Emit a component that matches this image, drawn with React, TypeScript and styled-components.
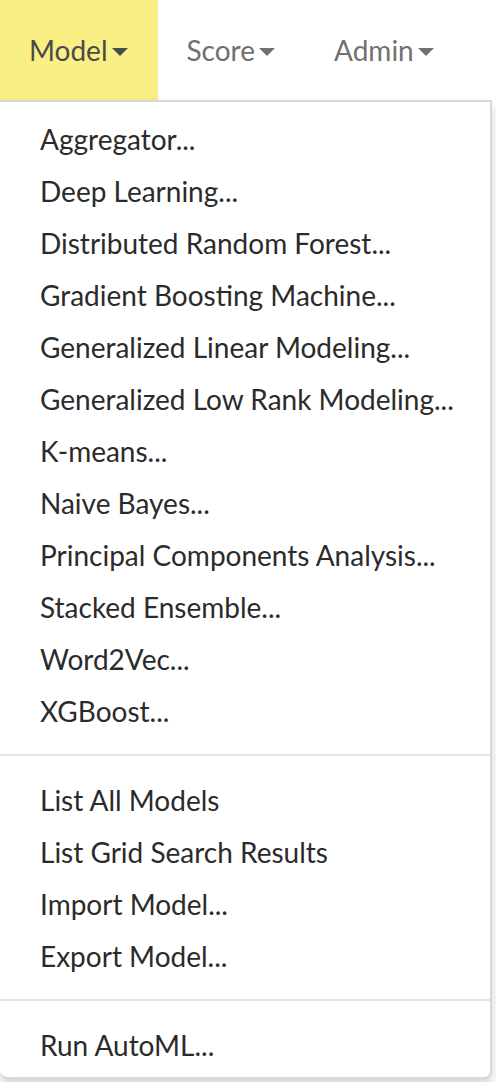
import React from "react";
import styled, { createGlobalStyle } from "styled-components";

const GlobalStyle = createGlobalStyle`
  html, body {
    margin: 0;
    padding: 0;
    background: #ffffff;
  }
  body {
    font-family: Lato, "Open Sans", Arial, sans-serif;
  }
`;

const Page = styled.div`
  position: relative;
  width: 496px;
  height: 1082px;
  overflow: hidden;
  background: #ffffff;
`;

const Navbar = styled.div`
  display: flex;
  height: 100px;
  background: #ffffff;
`;

const NavItem = styled.div<{ $active?: boolean }>`
  display: flex;
  align-items: center;
  padding: 0 30px 0 29px;
  height: 100px;
  font-size: 28px;
  color: ${(p) => (p.$active ? "#4a4a4a" : "#707070")};
  background: ${(p) => (p.$active ? "#f9ef85" : "transparent")};
  box-sizing: border-box;
`;

const Caret = styled.span`
  display: inline-block;
  width: 0;
  height: 0;
  margin-left: 4px;
  margin-top: 4px;
  border-top: 8px solid currentColor;
  border-left: 8px solid transparent;
  border-right: 8px solid transparent;
`;

const Dropdown = styled.ul`
  position: absolute;
  top: 100px;
  left: 0;
  width: 492px;
  box-sizing: border-box;
  margin: 0;
  padding: 11px 0 6px;
  list-style: none;
  background: #ffffff;
  border: 2px solid #d9d9d9;
  border-left: none;
  border-radius: 0 0 8px 8px;
  box-shadow: 0 6px 12px rgba(0, 0, 0, 0.175);
`;

const MenuItem = styled.li`
  padding: 6px 20px 6px 40px;
  line-height: 40px;
  font-size: 28px;
  color: #2b2b2b;
  white-space: nowrap;
`;

const Divider = styled.li`
  height: 2px;
  margin: 17px 0 18px;
  background: #e5e5e5;
`;

const builders = [
  "Aggregator...",
  "Deep Learning...",
  "Distributed Random Forest...",
  "Gradient Boosting Machine...",
  "Generalized Linear Modeling...",
  "Generalized Low Rank Modeling...",
  "K-means...",
  "Naive Bayes...",
  "Principal Components Analysis...",
  "Stacked Ensemble...",
  "Word2Vec...",
  "XGBoost...",
];

const listing = ["List All Models", "List Grid Search Results", "Import Model...", "Export Model..."];

export default function App() {
  return (
    <Page>
      <GlobalStyle />
      <Navbar>
        <NavItem $active>
          Model
          <Caret />
        </NavItem>
        <NavItem>
          Score
          <Caret />
        </NavItem>
        <NavItem>
          Admin
          <Caret />
        </NavItem>
      </Navbar>
      <Dropdown>
        {builders.map((b) => (
          <MenuItem key={b}>{b}</MenuItem>
        ))}
        <Divider />
        {listing.map((b) => (
          <MenuItem key={b}>{b}</MenuItem>
        ))}
        <Divider />
        <MenuItem>Run AutoML...</MenuItem>
      </Dropdown>
    </Page>
  );
}
